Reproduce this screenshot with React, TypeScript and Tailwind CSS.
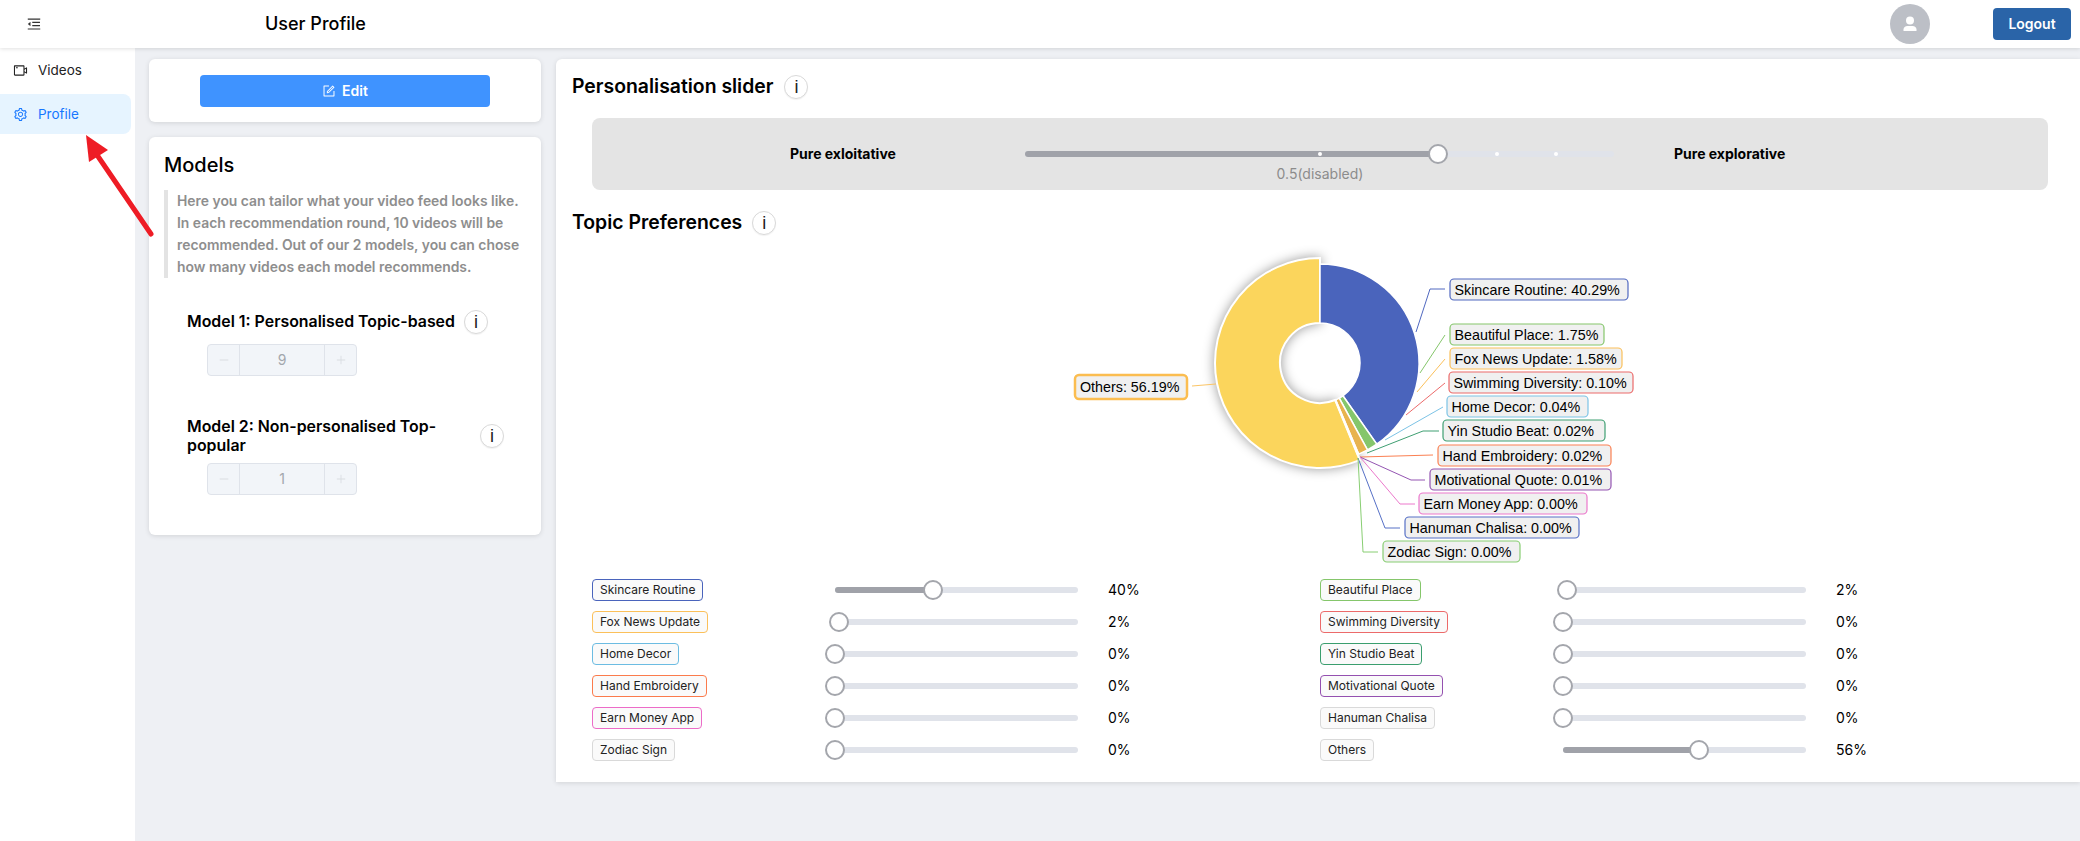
import type { ReactNode } from "react"
import { AiOutlineMenuFold, AiOutlineVideoCamera, AiOutlineSetting, AiOutlineForm, AiOutlinePlus, AiOutlineMinus } from "react-icons/ai"

const CX = 1320
const CY = 363

const SLICES = [
  { from: 0, to: 40.29, r: 99, color: "#4a64bc" },
  { from: 40.29, to: 42.04, r: 99, color: "#85c66b" },
  { from: 42.04, to: 43.62, r: 99, color: "#e8b34e" },
  { from: 43.62, to: 43.81, r: 99, color: "#e26a5f" },
]

const LABELS = [
  { text: "Skincare Routine: 40.29%", x: 1450, y: 279, w: 178, color: "#5068c0", line: "1416,332 1430,289 1445,289" },
  { text: "Beautiful Place: 1.75%", x: 1450, y: 324, w: 154, color: "#85c66b", line: "1420,373 1445,335" },
  { text: "Fox News Update: 1.58%", x: 1450, y: 348, w: 172, color: "#fbc05a", line: "1417,392 1445,359" },
  { text: "Swimming Diversity: 0.10%", x: 1449, y: 372, w: 184, color: "#ec6a6a", line: "1406,415 1445,383" },
  { text: "Home Decor: 0.04%", x: 1447, y: 396, w: 141, color: "#7cc3e6", line: "1385,440 1443,407" },
  { text: "Yin Studio Beat: 0.02%", x: 1443, y: 420, w: 162, color: "#3f9f72", line: "1367,453 1423,431 1439,431" },
  { text: "Hand Embroidery: 0.02%", x: 1438, y: 445, w: 173, color: "#fb8052", line: "1360,457 1433,455" },
  { text: "Motivational Quote: 0.01%", x: 1430, y: 469, w: 181, color: "#9455b2", line: "1360,457 1411,480 1425,480" },
  { text: "Earn Money App: 0.00%", x: 1419, y: 493, w: 168, color: "#ec78cc", line: "1360,457 1400,504 1415,504" },
  { text: "Hanuman Chalisa: 0.00%", x: 1405, y: 517, w: 174, color: "#5670c6", line: "1358,458 1385,528 1400,528" },
  { text: "Zodiac Sign: 0.00%", x: 1383, y: 541, w: 137, color: "#88ce72", line: "1358,458 1363,552 1378,552" },
]

const TOPICS = [
  { name: "Skincare Routine", color: "border-[#4a64bc]", thumb: 98, pct: "40%" },
  { name: "Beautiful Place", color: "border-[#85c66b]", thumb: 4, pct: "2%" },
  { name: "Fox News Update", color: "border-[#fbc05a]", thumb: 4, pct: "2%" },
  { name: "Swimming Diversity", color: "border-[#ec6a6a]", thumb: 0, pct: "0%" },
  { name: "Home Decor", color: "border-[#6cbce2]", thumb: 0, pct: "0%" },
  { name: "Yin Studio Beat", color: "border-[#3a9e6e]", thumb: 0, pct: "0%" },
  { name: "Hand Embroidery", color: "border-[#fb7b4c]", thumb: 0, pct: "0%" },
  { name: "Motivational Quote", color: "border-[#9450b0]", thumb: 0, pct: "0%" },
  { name: "Earn Money App", color: "border-[#ec6cc8]", thumb: 0, pct: "0%" },
  { name: "Hanuman Chalisa", color: "border-[#d9d9d9]", thumb: 0, pct: "0%" },
  { name: "Zodiac Sign", color: "border-[#d9d9d9]", thumb: 0, pct: "0%" },
  { name: "Others", color: "border-[#d9d9d9]", thumb: 136, pct: "56%" },
]

function arc(from: number, to: number, r: number, inner: number) {
  const pt = (pct: number, rad: number) => {
    const a = (pct / 100) * Math.PI * 2
    return `${CX + rad * Math.sin(a)} ${CY - rad * Math.cos(a)}`
  }
  const large = to - from > 50 ? 1 : 0
  return `M${pt(from, r)} A${r} ${r} 0 ${large} 1 ${pt(to, r)} L${pt(to, inner)} A${inner} ${inner} 0 ${large} 0 ${pt(from, inner)} Z`
}

function Info() {
  return (
    <span className="flex h-6 w-6 shrink-0 items-center justify-center rounded-full border border-[#d9d9d9] bg-white font-['Liberation_Sans',sans-serif] text-lg font-normal text-[#222] shadow-[0_1px_1px_rgba(0,0,0,0.05)]">
      i
    </span>
  )
}

function Slider({ thumb, width = 243 }: { thumb: number; width?: number }) {
  return (
    <div className="relative h-1.5 rounded-full bg-[#e0e3ea]" style={{ width }}>
      <div className="h-1.5 rounded-full bg-[#a0a2a9]" style={{ width: thumb }} />
      <span
        className="absolute top-[-7px] h-5 w-5 -translate-x-1/2 rounded-full border-2 border-[#a4a6ac] bg-white"
        style={{ left: thumb }}
      />
    </div>
  )
}

function Stepper({ value }: { value: number }) {
  return (
    <div className="ml-5 flex h-8 w-[150px] items-center rounded-[4px] border border-[#dfe3ea] bg-[#f2f5f9] text-sm text-[#a3a7ad]">
      <span className="flex h-full w-8 items-center justify-center border-r border-[#dfe3ea] text-[#dadde2]">
        <AiOutlineMinus size={12} />
      </span>
      <span className="flex-1 text-center">{value}</span>
      <span className="flex h-full w-8 items-center justify-center border-l border-[#dfe3ea] text-[#dadde2]">
        <AiOutlinePlus size={12} />
      </span>
    </div>
  )
}

function NavItem({ icon, label, active }: { icon: ReactNode; label: string; active?: boolean }) {
  return (
    <div
      className={
        active
          ? "flex h-10 w-[131px] items-center gap-[10px] rounded-r-lg bg-[#e6f4ff] pl-[13px] text-[13.5px] text-[#1677ff]"
          : "flex h-10 w-[131px] items-center gap-[10px] pl-[13px] text-[13.5px] text-[#222]"
      }
    >
      {icon}
      {label}
    </div>
  )
}

function Chart() {
  return (
    <svg viewBox="1060 240 600 330" className="ml-[488px] mt-[5px] block h-[330px] w-[600px]">
      <path
        d={arc(43.81, 100, 105, 40)}
        fill="#fbd55c"
        stroke="#fff"
        strokeWidth="2"
        className="drop-shadow-[0_0_6px_rgba(0,0,0,0.4)]"
      />
      {SLICES.map((s) => (
        <path key={s.color} d={arc(s.from, s.to, s.r, 40)} fill={s.color} stroke="#fff" strokeWidth="1.5" />
      ))}
      <polyline points="1192,386 1216,384" fill="none" stroke="#fbc566" strokeWidth="1" />
      {LABELS.map((l) => (
        <g key={l.text}>
          <polyline points={l.line} fill="none" stroke={l.color} strokeWidth="1" />
          <rect x={l.x} y={l.y} width={l.w} height={21} rx="4" fill="#f0f0f0" stroke={l.color} strokeWidth="1.2" />
          <text x={l.x + 4.5} y={l.y + 15.5} className="fill-black font-['Liberation_Sans',sans-serif] text-[14.3px]">
            {l.text}
          </text>
        </g>
      ))}
      <rect x="1075" y="375" width="112" height="24" rx="4" fill="#f0f0f0" stroke="#fbbd50" strokeWidth="2.500" />
      <text x="1080" y="392" className="fill-black font-['Liberation_Sans',sans-serif] text-[14.3px]">
        Others: 56.19%
      </text>
    </svg>
  )
}

export default function App() {
  return (
    <div className="relative flex h-[841px] w-[2080px] flex-col overflow-hidden bg-[#eef0f4] font-[Inter,sans-serif] text-black">
      <header className="relative z-10 flex h-12 shrink-0 items-center bg-white pl-[26px] pr-[9px] shadow-[0_1px_4px_rgba(0,0,0,0.12)]">
        <AiOutlineMenuFold size={16} className="text-[#333]" />
        <h1 className="ml-[223px] text-lg font-medium">User Profile</h1>
        <div className="ml-auto flex h-10 w-10 items-center justify-center rounded-full bg-[#bcbfc6]">
          <svg viewBox="0 0 20 20" className="h-5 w-5" fill="#fff">
            <circle cx="10" cy="6.5" r="4" />
            <path d="M3.5 17v-1.5c0-2 1.8-3.5 4-3.5h5c2.200 0 4 1.500 4 3.500V17z" />
          </svg>
        </div>
        <button className="ml-[63px] flex h-8 w-[78px] items-center justify-center rounded-[4px] bg-[#2a64a8] text-sm font-semibold text-white">
          Logout
        </button>
      </header>

      <div className="flex flex-1">
        <aside className="w-[135px] shrink-0 bg-white pt-[2px]">
          <NavItem icon={<AiOutlineVideoCamera size={15} />} label="Videos" />
          <div className="mt-1">
            <NavItem icon={<AiOutlineSetting size={15} />} label="Profile" active />
          </div>
        </aside>

        <main className="ml-[14px] flex flex-1 items-start gap-[15px] pt-[11px]">
          <div className="flex w-[392px] shrink-0 flex-col gap-[15px]">
            <section className="flex h-[63px] items-center justify-center rounded-md bg-white shadow-[0_1px_5px_rgba(0,0,0,0.12)]">
              <button className="flex h-8 w-[290px] items-center justify-center gap-[6px] rounded-[4px] bg-[#3f93ff] pt-[1px] text-sm font-semibold text-white">
                <AiOutlineForm size={14} />
                Edit
              </button>
            </section>

            <section className="h-[398px] rounded-md bg-white pl-[15px] pt-[16px] shadow-[0_1px_5px_rgba(0,0,0,0.12)]">
              <h2 className="text-xl font-medium leading-6">Models</h2>
              <p className="mt-[13px] w-[360px] border-l-4 border-[#e3e3e3] pl-[9px] text-[13.9px] font-semibold leading-[22px] text-[#8e8e8e]">
                Here you can tailor what your video feed looks like. In each recommendation round, 10 videos will be recommended. Out of our 2 models, you can chose how many videos each model recommends.
              </p>
              <div className="ml-[23px] mt-[32px]">
                <div className="flex h-6 items-center gap-[9px] text-[15.9px] font-semibold">
                  Model 1: Personalised Topic-based
                  <Info />
                </div>
                <div className="mt-[10px]">
                  <Stepper value={9} />
                </div>
                <div className="mt-[41px] flex items-center gap-[11px]">
                  <div className="w-[282px] text-[15.9px] font-semibold leading-[19px]">Model 2: Non-personalised Top-popular</div>
                  <Info />
                </div>
                <div className="mt-[8px]">
                  <Stepper value={1} />
                </div>
              </div>
            </section>
          </div>

          <section className="h-[723px] flex-1 rounded-tl-md bg-white pl-[16px] pt-[16px] shadow-[0_1px_5px_rgba(0,0,0,0.12)]">
            <div className="flex h-6 items-center gap-[11px] text-[19.4px] font-semibold">
              Personalisation slider
              <Info />
            </div>
            <div className="ml-[20px] mt-[19px] flex h-[72px] w-[1456px] items-center rounded-lg bg-[#e4e4e4] pl-[198px] text-sm font-bold">
              <span className="w-[106px] whitespace-nowrap">Pure exloitative</span>
              <div className="relative ml-[129px] w-[589px]">
                <Slider thumb={413} width={589} />
                <span className="absolute left-[293px] top-[1px] h-1 w-1 rounded-full bg-white" />
                <span className="absolute left-[470px] top-[1px] h-1 w-1 rounded-full bg-white" />
                <span className="absolute left-[529px] top-[1px] h-1 w-1 rounded-full bg-white" />
                <span className="absolute left-[295px] top-[13px] -translate-x-1/2 whitespace-nowrap text-sm font-normal text-[#8c8c8c]">
                  0.5(disabled)
                </span>
              </div>
              <span className="ml-[60px] whitespace-nowrap">Pure explorative</span>
            </div>
            <div className="mt-[21px] flex h-6 items-center gap-[10px] text-[19.4px] font-semibold">
              Topic Preferences
              <Info />
            </div>
            <Chart />
            <div className="ml-[20px] mt-[4px] grid grid-cols-[728px_1fr]">
              {TOPICS.map((t) => (
                <div key={t.name} className="grid h-8 grid-cols-[243px_243px_1fr] items-center">
                  <span className={`flex h-[22px] w-fit items-center rounded-[4px] border bg-[#fafafa] px-[7px] text-xs text-[#222] ${t.color}`}>
                    {t.name}
                  </span>
                  <Slider thumb={t.thumb} />
                  <span className="pl-[30px] text-sm">{t.pct}</span>
                </div>
              ))}
            </div>
          </section>
        </main>
      </div>

      {/* annotation arrow over the page */}
      <svg viewBox="0 0 170 250" className="absolute left-0 top-0 z-20 h-[250px] w-[170px]">
        <line x1="151" y1="234" x2="95" y2="152" stroke="#ee1c25" strokeWidth="5" strokeLinecap="round" />
        <polygon points="86,135 108,150 89,162" fill="#ee1c25" />
      </svg>
    </div>
  )
}
